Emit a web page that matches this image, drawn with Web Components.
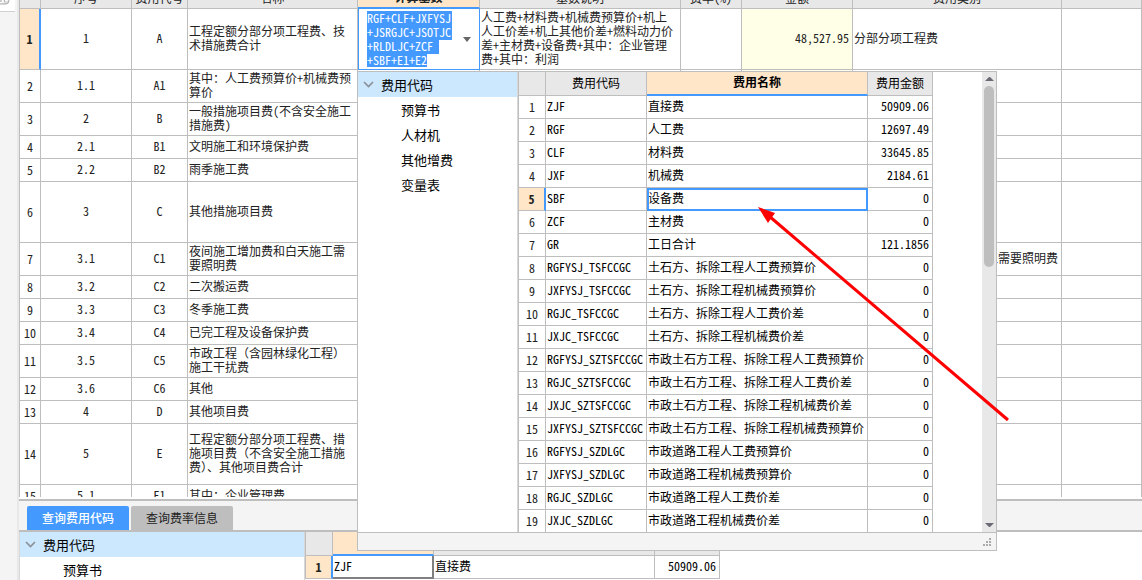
<!DOCTYPE html>
<html lang="zh-CN">
<head>
<meta charset="utf-8">
<title>费用汇总</title>
<style>
  html, body { margin: 0; height: 100%; }
  body {
    --line: #bebebe; --blue: #4499ff; --peach: #ffe6c8; --bar: #f4f4f4; --head: #e8e8e8; --pick: #cce8ff;
    font: 12px/14px "Noto Sans Mono CJK SC", "Noto Sans CJK SC", sans-serif;
    color: #222; background: #fff; overflow: hidden;
  }
</style>
</head>
<body>
<cost-app></cost-app>
<script>
const define = (name, html, setup) => {
  const template = document.createElement('template');
  template.innerHTML = html;
  customElements.define(name, class extends HTMLElement {
    connectedCallback() {
      if (this.shadowRoot) return;
      this.attachShadow({ mode: 'open' }).append(template.content.cloneNode(true));
      if (setup) setup(this, this.shadowRoot);
    }
  });
};

const mainRows = [
  [61, '1', 'A', '工程定额分部分项工程费、技\n术措施费合计', '', '人工费+材料费+机械费预算价+机上\n人工价差+机上其他价差+燃料动力价\n差+主材费+设备费+其中：企业管理\n费+其中：利润', '', '48,527.95', '分部分项工程费', ''],
  [33, '1.1', 'A1', '其中：人工费预算价+机械费预\n算价'],
  [33, '2', 'B', '一般措施项目费(不含安全施工\n措施费)'],
  [23, '2.1', 'B1', '文明施工和环境保护费'],
  [23, '2.2', 'B2', '雨季施工费'],
  [61, '3', 'C', '其他措施项目费'],
  [33, '3.1', 'C1', '夜间施工增加费和白天施工需\n要照明费', '', '', '', '', '夜间施工增加费和白天施工需要照明费', ''],
  [23, '3.2', 'C2', '二次搬运费'],
  [23, '3.3', 'C3', '冬季施工费'],
  [23, '3.4', 'C4', '已完工程及设备保护费'],
  [33, '3.5', 'C5', '市政工程（含园林绿化工程）\n施工干扰费'],
  [23, '3.6', 'C6', '其他'],
  [23, '4', 'D', '其他项目费'],
  [61, '5', 'E', '工程定额分部分项工程费、措\n施项目费（不含安全施工措施\n费）、其他项目费合计'],
  [23, '5.1', 'E1', '其中：企业管理费'],
];
const codes = [
  ['ZJF', '直接费', '50909.06'], ['RGF', '人工费', '12697.49'], ['CLF', '材料费', '33645.85'],
  ['JXF', '机械费', '2184.61'], ['SBF', '设备费', '0'], ['ZCF', '主材费', '0'], ['GR', '工日合计', '121.1856'],
  ['RGFYSJ_TSFCCGC', '土石方、拆除工程人工费预算价', '0'],
  ['JXFYSJ_TSFCCGC', '土石方、拆除工程机械费预算价', '0'],
  ['RGJC_TSFCCGC', '土石方、拆除工程人工费价差', '0'],
  ['JXJC_TSFCCGC', '土石方、拆除工程机械费价差', '0'],
  ['RGFYSJ_SZTSFCCGC', '市政土石方工程、拆除工程人工费预算价', '0'],
  ['RGJC_SZTSFCCGC', '市政土石方工程、拆除工程人工费价差', '0'],
  ['JXJC_SZTSFCCGC', '市政土石方工程、拆除工程机械费价差', '0'],
  ['JXFYSJ_SZTSFCCGC', '市政土石方工程、拆除工程机械费预算价', '0'],
  ['RGFYSJ_SZDLGC', '市政道路工程人工费预算价', '0'],
  ['JXFYSJ_SZDLGC', '市政道路工程机械费预算价', '0'],
  ['RGJC_SZDLGC', '市政道路工程人工费价差', '0'],
  ['JXJC_SZDLGC', '市政道路工程机械费价差', '0'],
];
const cell = (tag, cls, text) => {
  const c = document.createElement(tag);
  if (cls) c.className = cls;
  c.textContent = text;
  return c;
};
const gridStyle = `
  table { border-collapse: separate; border-spacing: 0; table-layout: fixed; border-left: 1px solid var(--line); }
  th, td { box-sizing: border-box; border: solid var(--line); border-width: 0 1px 1px 0; padding: 0 1px 2px; text-align: left; white-space: pre; overflow: hidden; vertical-align: middle; font-weight: normal; }
  thead th { background: var(--head); text-align: center; }
  thead .on { background: var(--peach); border-bottom: 2px solid var(--blue); font-weight: bold; }
  tbody th { text-align: center; padding: 0; }
  tbody th.on { background: var(--peach); font-weight: bold; border-right: 2px solid var(--blue); }
  .mid { text-align: center; } .num { text-align: right; padding-right: 3px; }
`;

/* Formula box with its drop-down arrow */
define('formula-editor', `
  <style>
    :host { display: flex; align-items: center; justify-content: space-between; height: 60px; box-shadow: inset 1px 0 var(--blue); }
    textarea { box-sizing: border-box; width: 85px; height: 56px; margin: 0 0 0 9px; padding: 0; border: 0; outline: 0; resize: none; overflow: hidden; font: inherit; color: inherit; background: none; word-break: break-all; }
    textarea::selection { background: var(--blue); color: #fff; }
    button { border: 0; background: none; padding: 0; width: 24px; height: 24px; display: grid; place-items: center; }
  </style>
  <textarea aria-label="计算基数" spellcheck="false">RGF+CLF+JXFYSJ+JSRGJC+JSQTJC+RLDLJC+ZCF
+SBF+E1+E2</textarea>
  <button aria-label="展开"><svg width="8" height="5"><path d="M0 0H8L4 5Z" fill="#666"/></svg></button>`,
  (host, root) => { const t = root.querySelector('textarea'); t.focus({ preventScroll: true }); t.select(); });

define('summary-grid', `
  <style>
    :host { display: block; overflow: hidden; }
    ${gridStyle}
    table { width: 100%; }
    thead th { padding: 0; }
    thead div { display: flex; align-items: flex-end; justify-content: center; height: 8px; overflow: hidden; }
    thead span { line-height: 20px; }
    thead .on div { height: 7px; }
    .money { background: #ffffe8; }
    .edit { padding: 0; border-color: var(--blue); }
  </style>
  <table><colgroup></colgroup><thead><tr></tr></thead><tbody></tbody></table>`,
  (host, root) => {
    const widths = [21, 91, 56, 170, 122, 201, 61, 111, 209, 0];
    widths.forEach(w => { const c = document.createElement('col'); if (w) c.style.width = w + 'px'; root.querySelector('colgroup').append(c); });
    ['', '序号', '费用代号', '名称', '计算基数', '基数说明', '费率(%)', '金额', '费用类别', ''].forEach((t, i) => {
      const h = cell('th', i === 4 ? 'on' : '', '');
      const d = cell('div', '', ''); d.append(cell('span', '', t)); h.append(d);
      root.querySelector('thead tr').append(h);
    });
    mainRows.forEach(([height, ...values], r) => {
      const tr = document.createElement('tr');
      tr.style.height = height + 'px';
      tr.append(cell('th', r ? '' : 'on', r + 1));
      for (let i = 0; i < 9; i++) {
        let cls = i < 2 ? 'mid' : i === 6 ? 'num money' : '';
        const td = cell('td', cls, values[i] || '');
        if (!r && i === 3) { td.className = 'edit'; td.append(document.createElement('formula-editor')); }
        tr.append(td);
      }
      root.querySelector('tbody').append(tr);
    });
  });

/* Code list: number, code, name, amount */
define('code-grid', `
  <style>
    :host { display: block; color: #000; }
    ${gridStyle}
    thead tr { height: 24px; } tbody tr { height: 23px; }
    tbody th { color: #222; }
    .focus { outline: 2px solid var(--blue); outline-offset: -2px; }
    .rest { border-right: 2px solid #808080; border-bottom: 2px solid #808080; }
  </style>
  <table><colgroup><col style="width:27px"><col style="width:101px"><col style="width:221px"><col style="width:65px"></colgroup>
  <thead><tr></tr></thead><tbody></tbody></table>`,
  (host, root) => {
    const count = +host.getAttribute('rows'), row = +host.getAttribute('row'), col = +host.getAttribute('column');
    root.querySelector('table').style.width = '415px';
    ['', '费用代码', '费用名称', '费用金额'].forEach((t, i) => root.querySelector('thead tr').append(cell('th', i === col ? 'on' : '', t)));
    codes.slice(0, count).forEach((values, r) => {
      const tr = document.createElement('tr'), here = r + 1 === row;
      tr.append(cell('th', here ? 'on' : '', r + 1));
      values.forEach((v, i) => tr.append(cell('td', (i === 2 ? 'num ' : '') + (here && i + 1 === col ? host.getAttribute('mark') : ''), v)));
      root.querySelector('tbody').append(tr);
    });
  });

define('code-tree', `
  <style>
    :host { display: block; font: 13px/25px "Noto Sans CJK SC", sans-serif; color: #000; background: #fff; }
    ul { list-style: none; margin: 0; padding: 0; }
    .top { display: flex; align-items: center; gap: 7px; padding-left: 5px; background: var(--pick); }
    li li { padding-left: 43px; }
  </style>
  <ul role="tree"><li role="treeitem" aria-expanded="true"><div class="top"><svg width="11" height="7" fill="none" stroke="#8a8f96" stroke-width="1.6"><path d="M1 1L5.500 5.500L10 1"/></svg>费用代码</div>
    <ul role="group"><li role="treeitem">预算书</li><li role="treeitem">人材机</li><li role="treeitem">其他增费</li><li role="treeitem">变量表</li></ul></li></ul>`);

define('scroll-rail', `
  <style>
    :host { display: flex; flex-direction: column; align-items: center; width: 14px; background: var(--head); }
    svg { flex: none; margin: 5px 0; }
    .track { flex: 1; width: 10px; }
    .thumb { height: 42%; border-radius: 5px; background: var(--line); }
  </style>
  <svg width="9" height="4"><path d="M0 4H9L5 0H4Z" fill="#6a6a74"/></svg>
  <div class="track"><div class="thumb"></div></div>
  <svg width="9" height="4"><path d="M0 0H9L5 4H4Z" fill="#6a6a74"/></svg>`);

define('code-popup', `
  <style>
    :host { display: block; box-sizing: border-box; width: 640px; border: 1px solid var(--line); background: #fff; }
    .body { display: flex; height: 460px; overflow: hidden; }
    code-tree { flex: 1; border-right: 1px solid #d8d8d8; }
    .list { display: flex; justify-content: space-between; width: 478px; }
    footer { display: flex; justify-content: flex-end; align-items: center; height: 17px; padding-right: 5px; border-top: 1px solid var(--line); background: var(--bar); }
  </style>
  <div class="body"><code-tree></code-tree><div class="list"><code-grid rows="19" row="5" column="2" mark="focus"></code-grid><scroll-rail></scroll-rail></div></div>
  <footer><svg width="8" height="8" fill="#aaa"><path d="M6 0h2v2h-2zM3 3h2v2h-2zM6 3h2v2h-2zM0 6h2v2h-2zM3 6h2v2h-2zM6 6h2v2h-2z"/></svg></footer>`);

define('query-panel', `
  <style>
    :host { display: block; border-top: 2px solid var(--line); overflow: hidden; }
    nav { display: flex; gap: 2px; padding: 5px 0 0 8px; background: var(--bar); border-bottom: 2px solid var(--line); }
    button { width: 102px; height: 24px; padding: 0; border: 0; border-radius: 2px 2px 0 0; font: 12px/24px "Noto Sans CJK SC", sans-serif; color: #222; background: var(--line); }
    button[aria-selected=true] { color: #fff; background: var(--blue); font-weight: 500; }
    .body { display: flex; }
    code-tree { box-sizing: border-box; width: 286px; border: solid #d8d8d8; border-width: 0 1px; }
  </style>
  <nav role="tablist"><button role="tab" aria-selected="true">查询费用代码</button><button role="tab" aria-selected="false">查询费率信息</button></nav>
  <div class="body"><code-tree></code-tree><code-grid rows="1" row="1" column="1" mark="rest"></code-grid></div>`);

define('cost-app', `
  <style>
    :host { display: flex; height: 100vh; position: relative; overflow: hidden; }
    aside { flex: none; box-sizing: border-box; width: 19px; background: var(--bar); border-right: 2px solid var(--head); }
    .tool { box-sizing: border-box; width: 15px; height: 12px; background: #fff; border-bottom: 1px solid #d0d0d0; }
    .tool svg { display: block; }
    main { flex: 1; min-width: 0; display: flex; flex-direction: column; }
    summary-grid { flex: 1; min-height: 0; }
    .gap { height: 2px; }
    query-panel { flex: none; height: 79px; }
    code-popup { position: absolute; left: 357px; top: 71px; }
    .arrow { position: absolute; left: 757px; top: 205px; pointer-events: none; }
  </style>
  <aside><div class="tool"><svg width="10" height="5"><path d="M0 4H6Q9 4 9 0" fill="#ddd" stroke="#aaa"/><path d="M1 0V2M4 0L5 2" stroke="#999"/></svg></div></aside>
  <main><summary-grid></summary-grid><div class="gap"></div><query-panel></query-panel></main>
  <code-popup></code-popup>
  <svg class="arrow" width="254" height="218"><path d="M12 11L251 215" stroke="#f00" stroke-width="3"/><path d="M1 2L18 8L11 18Z" fill="#f00"/></svg>`);
</script>
</body>
</html>
